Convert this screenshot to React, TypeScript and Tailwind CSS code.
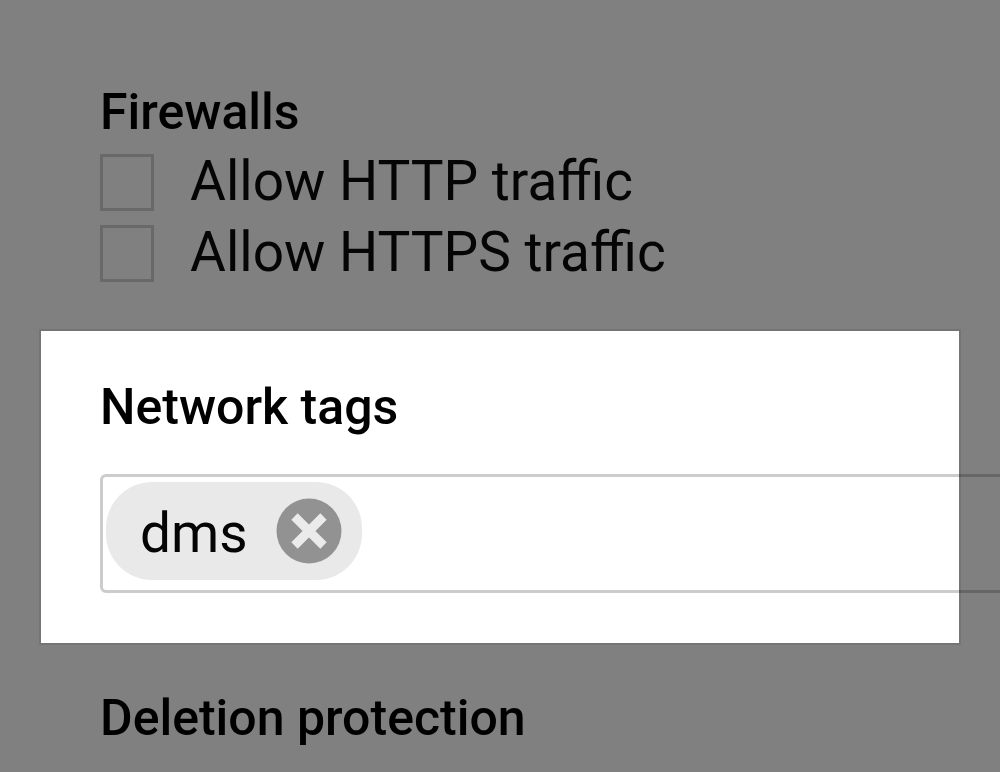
import React, { useState } from 'react';

const rules = [
    { id: 'http', label: 'Allow HTTP traffic' },
    { id: 'https', label: 'Allow HTTPS traffic' },
];

const headingClass = 'text-[50px] leading-[60px] font-medium text-black';

const RemoveIcon = () => (
    <svg viewBox="0 0 66 66" className="block w-full h-full" aria-hidden="true">
        <circle cx="33" cy="33" r="32.5" fill="#929292" />
        <path d="M18.5 18.5L47.5 47.5M47.5 18.5L18.5 47.5" stroke="#ebebeb" strokeWidth="9" />
    </svg>
);

export default function App() {
    const [checked, setChecked] = useState<Record<string, boolean>>({});
    const [tags, setTags] = useState(['dms']);
    const [draft, setDraft] = useState('');

    const addTag = (e: React.KeyboardEvent<HTMLInputElement>) => {
        if (e.key !== 'Enter' || !draft.trim()) return;
        setTags([...tags, draft.trim()]);
        setDraft('');
    };

    return (
        <main className="min-h-screen overflow-hidden bg-[#808080] px-[41px] pt-[82px] font-[Roboto,sans-serif]">
            <section className="px-[59px]">
                <h2 className={headingClass}>Firewalls</h2>
                <div className="mt-3 flex flex-col gap-[14px]">
                    {rules.map((rule) => (
                        <label key={rule.id} className="flex items-start gap-9 text-[55px] leading-[54px] text-[#050505]">
                            <input
                                type="checkbox"
                                checked={!!checked[rule.id]}
                                onChange={(e) => setChecked({ ...checked, [rule.id]: e.target.checked })}
                                className="appearance-none shrink-0 w-[54px] h-[57px] border-3 border-[#696969] checked:bg-[#696969]"
                            />
                            {rule.label}
                        </label>
                    ))}
                </div>
            </section>

            <section className="mt-[49px] bg-white ring-2 ring-[#747474] pl-[59px] pt-[46px] pb-[50px]">
                <label htmlFor="tags" className={`block ${headingClass}`}>Network tags</label>
                {/* the field runs past the highlighted panel to the window edge */}
                <div className="mt-[37px] -mr-16 flex items-start h-[119px] border-3 border-black/20 rounded-md pl-[3px] pt-[5px]">
                    {tags.map((tag) => (
                        <span key={tag} className="flex items-center h-[98px] rounded-[46px] bg-[#e9e9e9] pl-[34px] pr-5 gap-7 text-[55px] leading-[54px] text-[#050505]">
                            <span className="pt-1">{tag}</span>
                            <button
                                type="button"
                                aria-label={`Remove ${tag}`}
                                onClick={() => setTags(tags.filter((t) => t !== tag))}
                                className="w-[66px] h-[66px] rounded-full"
                            >
                                <RemoveIcon />
                            </button>
                        </span>
                    ))}
                    <input
                        id="tags"
                        type="text"
                        value={draft}
                        onChange={(e) => setDraft(e.target.value)}
                        onKeyDown={addTag}
                        className="flex-1 min-w-0 h-[98px] px-4 bg-transparent outline-none text-[55px]"
                    />
                </div>
            </section>

            <section className="mt-[45px] px-[59px]">
                <h2 className={headingClass}>Deletion protection</h2>
            </section>
        </main>
    );
}
